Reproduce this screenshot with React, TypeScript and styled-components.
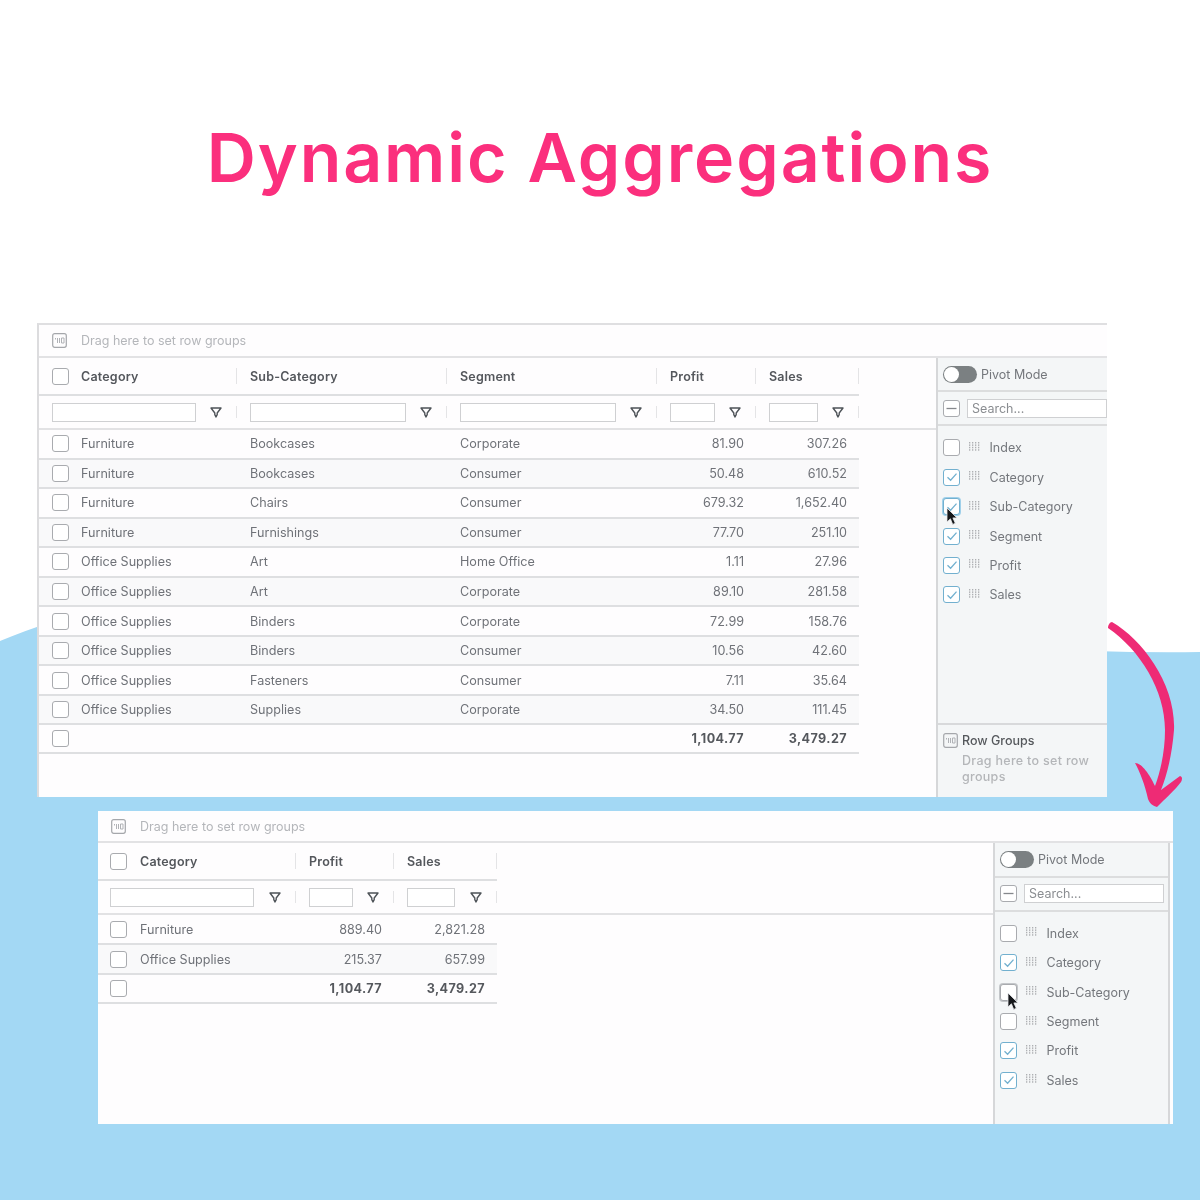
import React from "react";
import styled, { createGlobalStyle } from "styled-components";

const Global = createGlobalStyle`
  html, body { margin: 0; padding: 0; background: #fff; }
  * { box-sizing: border-box; }
`;

const Page = styled.div`
  position: relative;
  width: 1200px;
  height: 1200px;
  overflow: hidden;
  background: #fff;
  font-family: Inter, "Liberation Sans", sans-serif;
`;
const Backdrop = styled.svg`
  position: absolute;
  inset: 0;
`;
const ArrowArt = styled.svg`
  position: absolute;
  inset: 0;
  z-index: 2;
`;
const Title = styled.h1`
  position: relative;
  margin: 0;
  padding-top: 116px;
  height: 323px;
  text-align: center;
  font-family: Inter, "Open Sans", sans-serif;
  font-size: 68px;
  line-height: 82px;
  font-weight: 600;
  letter-spacing: 1.9px;
  color: #fb2f7d;
`;
const Window = styled.section<{ $left: number; $width: number; $height: number; $edge: boolean }>`
  position: relative;
  margin-left: ${(p) => p.$left}px;
  width: ${(p) => p.$width}px;
  height: ${(p) => p.$height}px;
  margin-bottom: 14px;
  background: #fefdfe;
  display: flex;
  flex-direction: column;
  overflow: hidden;
  filter: blur(0.3px);
  border-top: ${(p) => (p.$edge ? "2px solid #dfdfe1" : "0")};
  border-left: ${(p) => (p.$edge ? "2px solid #dcdcde" : "0")};
`;
const GroupBar = styled.div<{ $height: number; $pad: number }>`
  flex: none;
  height: ${(p) => p.$height}px;
  display: flex;
  align-items: center;
  gap: 14px;
  padding-left: ${(p) => p.$pad}px;
  border-bottom: 2px solid #e2e2e4;
  font-size: 12.5px;
  color: #b4b6ba;
`;
const Body = styled.div`
  flex: 1;
  min-height: 0;
  display: flex;
`;
const Main = styled.div`
  flex: 1;
  min-width: 0;
`;
const Row = styled.div<{ $height: number; $tinted?: boolean }>`
  display: flex;
  height: ${(p) => p.$height}px;
  background: ${(p) => (p.$tinted ? "#f9f9fa" : "transparent")};
  border-bottom: 2px solid #dedfe1;
`;
const FilterRow = styled.div<{ $height: number }>`
  display: flex;
  height: ${(p) => p.$height}px;
  border-bottom: 2px solid #e2e2e4;
`;
const Cell = styled.div<{ $width: number; $right?: boolean; $pad: number; $gap: number; $bold?: boolean }>`
  flex: none;
  width: ${(p) => p.$width}px;
  display: flex;
  align-items: center;
  justify-content: ${(p) => (p.$right ? "flex-end" : "flex-start")};
  gap: ${(p) => p.$gap}px;
  padding: 0 12px 0 ${(p) => p.$pad}px;
  font-size: 12.6px;
  letter-spacing: ${(p) => (p.$bold ? 0.4 : 0)}px;
  font-weight: ${(p) => (p.$bold ? 700 : 400)};
  color: ${(p) => (p.$bold ? "#55585d" : "#6f7278")};
  white-space: nowrap;
`;
const HeaderCell = styled.div<{ $width: number; $pad: number; $gap: number }>`
  position: relative;
  flex: none;
  width: ${(p) => p.$width}px;
  display: flex;
  align-items: center;
  gap: ${(p) => p.$gap}px;
  padding-left: ${(p) => p.$pad}px;
  font-size: 12.5px;
  letter-spacing: 0.2px;
  font-weight: 600;
  color: #54575c;
  &::after {
    content: "";
    position: absolute;
    right: 0;
    top: 10px;
    bottom: 10px;
    width: 1px;
    background: #e4e4e6;
  }
`;
const FilterCell = styled(HeaderCell)`
  padding-right: 15px;
  justify-content: space-between;
`;
const FilterInput = styled.div<{ $width: number }>`
  width: ${(p) => p.$width}px;
  height: 19px;
  border: 1px solid #cfd0d2;
  background: #fff;
`;
const Box = styled.span<{ $checked?: boolean; $halo?: string }>`
  flex: none;
  width: 17px;
  height: 17px;
  display: inline-flex;
  align-items: center;
  justify-content: center;
  border-radius: 3px;
  border: 1.7px solid ${(p) => (p.$checked ? "#72b0cf" : "#a9abaf")};
  background: #fff;
  box-shadow: ${(p) => (p.$halo ? `0 0 0 1px ${p.$halo}` : "none")};
`;
const Panel = styled.aside<{ $width: number; $closed: boolean }>`
  flex: none;
  width: ${(p) => p.$width}px;
  margin-right: ${(p) => (p.$closed ? 3 : 0)}px;
  display: flex;
  flex-direction: column;
  background: #f4f6f7;
  border-left: 2px solid #d6d7d9;
  border-right: ${(p) => (p.$closed ? "2px solid #d6d7d9" : "0")};
  overflow: hidden;
`;
const PanelBar = styled.div<{ $height: number }>`
  flex: none;
  height: ${(p) => p.$height}px;
  display: flex;
  align-items: center;
  padding-left: 5px;
  border-bottom: 2px solid #dcddde;
  font-size: 12.5px;
  color: #74777c;
`;
const Toggle = styled.span`
  flex: none;
  position: relative;
  width: 34px;
  height: 17px;
  margin-right: 4px;
  border-radius: 9px;
  background: #7b8082;
  &::before {
    content: "";
    position: absolute;
    left: 1px;
    top: 1px;
    width: 15px;
    height: 15px;
    border-radius: 50%;
    background: #fff;
  }
`;
const Search = styled.div`
  flex: none;
  width: 140px;
  height: 19px;
  margin-left: 7px;
  padding-left: 4px;
  border: 1px solid #cfd0d2;
  background: #fff;
  font-size: 12.5px;
  line-height: 17px;
  color: #8a8d91;
`;
const ColumnList = styled.div`
  flex: 1;
  padding: 7px 0 0 5px;
`;
const ColumnItem = styled.div`
  position: relative;
  height: 29.45px;
  display: flex;
  align-items: center;
  font-size: 12.5px;
  color: #74777c;
`;
const Dots = styled.svg`
  flex: none;
  margin: -2px 8.5px 0 9px;
`;
const Pointer = styled.svg<{ $left: number }>`
  position: absolute;
  left: ${(p) => p.$left}px;
  top: 15px;
`;
const Footer = styled.div`
  flex: none;
  height: 74px;
  padding: 8px 5px 0;
  border-top: 2px solid #d8d9db;
`;
const FooterTitle = styled.div`
  display: flex;
  align-items: center;
  gap: 4px;
  font-size: 12.5px;
  font-weight: 500;
  color: #55585c;
`;
const FooterHint = styled.div`
  margin: 5px 0 0 19px;
  font-size: 12.5px;
  line-height: 16px;
  letter-spacing: 0.3px;
  font-weight: 500;
  color: #b4b6b9;
`;
const StyledIcon = styled.svg`
  flex: none;
`;

const GroupIcon = () => (
  <StyledIcon width="15" height="15" viewBox="0 0 15 15" fill="none">
    <rect x="0.7" y="0.7" width="13.6" height="13.6" rx="2" stroke="#a5a7ab" strokeWidth="1.2" />
    <path d="M3.5 5v1.5M5.5 5v5M7.5 5v5M9.5 5h2.5v5H9.5z" stroke="#b0b2b6" strokeWidth="1" />
  </StyledIcon>
);
const Funnel = () => (
  <StyledIcon width="12" height="11" viewBox="0 0 12 11" fill="none">
    <path d="M1 1h10L7.2 6v1.6L6 10 4.8 7.6V6z" stroke="#4e5358" strokeWidth="1.4" strokeLinejoin="round" />
  </StyledIcon>
);
const Check = () => (
  <StyledIcon width="12" height="10" viewBox="0 0 12 10" fill="none">
    <path d="M1.5 5.2 4.6 8.2 10.5 1.6" stroke="#72b0cf" strokeWidth="1.3" />
  </StyledIcon>
);
const Minus = () => (
  <StyledIcon width="11" height="3" viewBox="0 0 11 3" fill="none">
    <path d="M0.5 1.5h10" stroke="#85888c" strokeWidth="1.3" />
  </StyledIcon>
);
const Grip = () => (
  <Dots width="12" height="10" viewBox="0 0 12 10" fill="#aeb0b3">
    {[0, 3, 6, 9].map((x) =>
      [0, 2.4, 4.8, 7.2].map((y) => <rect key={`${x}-${y}`} x={x} y={y} width="1.3" height="1.5" />)
    )}
  </Dots>
);
const Cursor = ({ left }: { left: number }) => (
  <Pointer $left={left} width="13" height="19" viewBox="0 0 13 19">
    <path d="M1 1v14l3.4-3.2 2.3 5.6 2.6-1.1-2.4-5.4H11z" fill="#15171a" stroke="#e8eaec" strokeWidth="0.8" />
  </Pointer>
);

type Column = { label: string; width: number; input: number; right?: boolean };
type GridProps = {
  left: number;
  width: number;
  height: number;
  edge: boolean;
  barHeight: number;
  firstPad: number;
  firstGap: number;
  headHeight: number;
  filterHeight: number;
  rowHeight: number;
  columns: Column[];
  rows: string[][];
  totals: string[];
  panelWidth: number;
  pivotHeight: number;
  searchHeight: number;
  closed: boolean;
  checked: string[];
  halo: string;
  cursorLeft: number;
  footer: boolean;
};

const fields = ["Index", "Category", "Sub-Category", "Segment", "Profit", "Sales"];

const Grid = (g: GridProps) => {
  const tableWidth = g.columns.reduce((a, c) => a + c.width, 0);
  const pad = (i: number) => (i === 0 ? g.firstPad : 13);
  return (
    <Window $left={g.left} $width={g.width} $height={g.height} $edge={g.edge}>
      <GroupBar $height={g.barHeight} $pad={13}>
        <GroupIcon />
        Drag here to set row groups
      </GroupBar>
      <Body>
        <Main>
          <Row $height={g.headHeight} style={{ width: tableWidth }}>
            {g.columns.map((c, i) => (
              <HeaderCell key={c.label} $width={c.width} $pad={pad(i)} $gap={g.firstGap}>
                {i === 0 && <Box />}
                {c.label}
              </HeaderCell>
            ))}
          </Row>
          <FilterRow $height={g.filterHeight}>
            {g.columns.map((c, i) => (
              <FilterCell key={c.label} $width={c.width} $pad={pad(i)} $gap={0}>
                <FilterInput $width={c.input} />
                <Funnel />
              </FilterCell>
            ))}
          </FilterRow>
          {g.rows.map((r, ri) => (
            <Row key={ri} $height={g.rowHeight} $tinted={ri % 2 === 1} style={{ width: tableWidth }}>
              {g.columns.map((c, i) => (
                <Cell key={c.label} $width={c.width} $pad={pad(i)} $gap={g.firstGap} $right={c.right}>
                  {i === 0 && <Box />}
                  {r[i]}
                </Cell>
              ))}
            </Row>
          ))}
          <Row $height={g.rowHeight - 1} style={{ width: tableWidth }}>
            {g.columns.map((c, i) => (
              <Cell key={c.label} $width={c.width} $pad={pad(i)} $gap={g.firstGap} $right={c.right} $bold>
                {i === 0 && <Box />}
                {g.totals[i]}
              </Cell>
            ))}
          </Row>
        </Main>
        <Panel $width={g.panelWidth} $closed={g.closed}>
          <PanelBar $height={g.pivotHeight}>
            <Toggle />
            Pivot Mode
          </PanelBar>
          <PanelBar $height={g.searchHeight}>
            <Box>
              <Minus />
            </Box>
            <Search>Search...</Search>
          </PanelBar>
          <ColumnList>
            {fields.map((f) => {
              const on = g.checked.includes(f);
              const hot = f === "Sub-Category";
              return (
                <ColumnItem key={f}>
                  <Box $checked={on} $halo={hot ? g.halo : undefined}>
                    {on && <Check />}
                  </Box>
                  <Grip />
                  {f}
                  {hot && <Cursor left={g.cursorLeft} />}
                </ColumnItem>
              );
            })}
          </ColumnList>
          {g.footer && (
            <Footer>
              <FooterTitle>
                <GroupIcon />
                Row Groups
              </FooterTitle>
              <FooterHint>
                Drag here to set row
                <br />
                groups
              </FooterHint>
            </Footer>
          )}
        </Panel>
      </Body>
    </Window>
  );
};

const firstRows = [
  ["Furniture", "Bookcases", "Corporate", "81.90", "307.26"],
  ["Furniture", "Bookcases", "Consumer", "50.48", "610.52"],
  ["Furniture", "Chairs", "Consumer", "679.32", "1,652.40"],
  ["Furniture", "Furnishings", "Consumer", "77.70", "251.10"],
  ["Office Supplies", "Art", "Home Office", "1.11", "27.96"],
  ["Office Supplies", "Art", "Corporate", "89.10", "281.58"],
  ["Office Supplies", "Binders", "Corporate", "72.99", "158.76"],
  ["Office Supplies", "Binders", "Consumer", "10.56", "42.60"],
  ["Office Supplies", "Fasteners", "Consumer", "7.11", "35.64"],
  ["Office Supplies", "Supplies", "Corporate", "34.50", "111.45"],
];

export default function App() {
  return (
    <Page>
      <Global />
      <Backdrop width="1200" height="1200" viewBox="0 0 1200 1200">
        <path d="M0 641C120 590 300 570 560 600C800 628 1000 655 1200 652V1200H0Z" fill="#a3d8f4" />
      </Backdrop>
      <Title>Dynamic Aggregations</Title>
      <Grid
        left={37}
        width={1070}
        height={474}
        edge
        barHeight={33}
        firstPad={13}
        firstGap={12}
        headHeight={38}
        filterHeight={34}
        rowHeight={29.55}
        columns={[
          { label: "Category", width: 198, input: 144 },
          { label: "Sub-Category", width: 210, input: 156 },
          { label: "Segment", width: 210, input: 156 },
          { label: "Profit", width: 99, input: 45, right: true },
          { label: "Sales", width: 103, input: 49, right: true },
        ]}
        rows={firstRows}
        totals={["", "", "", "1,104.77", "3,479.27"]}
        panelWidth={171}
        pivotHeight={34}
        searchHeight={34}
        closed={false}
        checked={["Category", "Sub-Category", "Segment", "Profit", "Sales"]}
        halo="#9fd0ea"
        cursorLeft={3}
        footer
      />
      <Grid
        left={98}
        width={1075}
        height={313}
        edge={false}
        barHeight={32}
        firstPad={12}
        firstGap={13}
        headHeight={38}
        filterHeight={34}
        rowHeight={30}
        columns={[
          { label: "Category", width: 198, input: 144 },
          { label: "Profit", width: 98, input: 44, right: true },
          { label: "Sales", width: 103, input: 48, right: true },
        ]}
        rows={[
          ["Furniture", "889.40", "2,821.28"],
          ["Office Supplies", "215.37", "657.99"],
        ]}
        totals={["", "1,104.77", "3,479.27"]}
        panelWidth={177}
        pivotHeight={35}
        searchHeight={33.5}
        closed
        checked={["Category", "Profit", "Sales"]}
        halo="#c3c6c9"
        cursorLeft={7}
        footer={false}
      />
      <ArrowArt width="1200" height="1200" viewBox="0 0 1200 1200">
        <path
          d="M1112 622C1143 640 1176 685 1174 730C1172 755 1167 775 1161 790L1180 776C1183 777 1182 780 1181 782C1175 790 1165 799 1157 807C1153 806 1150 804 1148 799C1145 785 1140 772 1135 763C1142 763 1150 775 1155 786C1161 770 1165 750 1165 730C1165 690 1140 650 1108 628C1108 625 1110 622 1112 622Z"
          fill="#ee2b75"
        />
      </ArrowArt>
    </Page>
  );
}
